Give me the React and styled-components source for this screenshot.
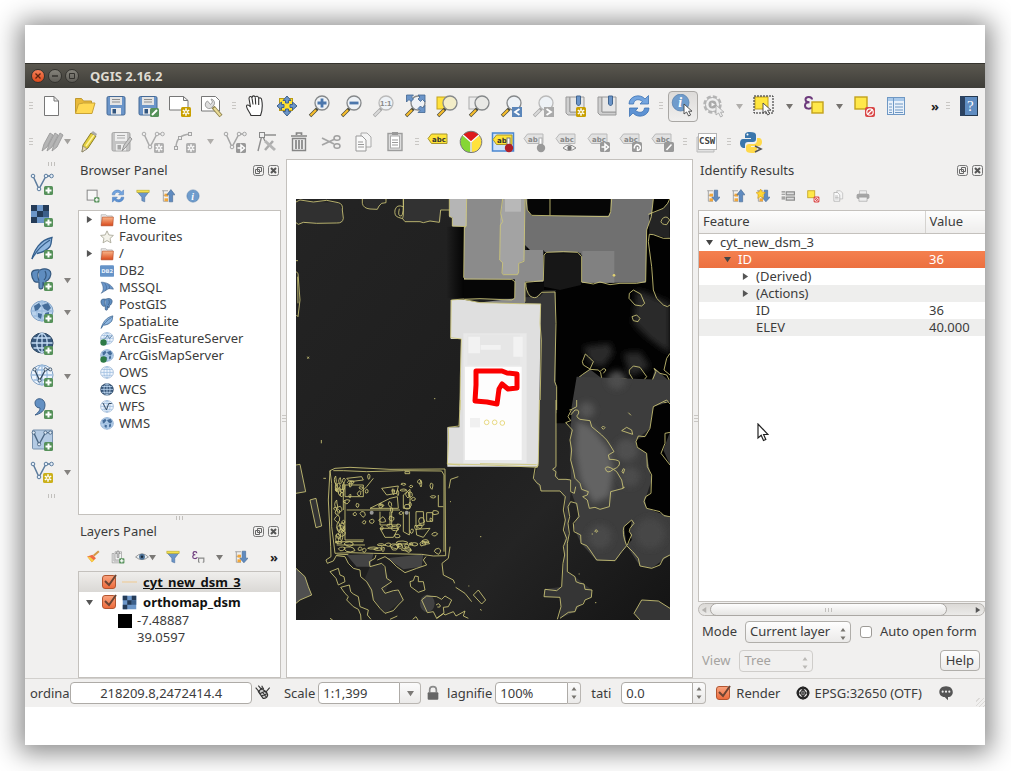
import React from "react";
import styled, { createGlobalStyle, css } from "styled-components";

const Global = createGlobalStyle`
  * { box-sizing: border-box; }
  body { margin: 0; background: #fff; }
  body, button, input, select, table {
    font-family: "Noto Sans", "Open Sans", sans-serif;
    font-size: 13px;
    line-height: 17px;
    color: #3c3c3c;
  }
`;

/* ---------- page and window ---------- */

const Page = styled.div`
  min-height: 100vh;
  padding: 25px 26px 26px 25px;
  display: flex;
  overflow: hidden;
`;
const Sheet = styled.div`
  flex: 1;
  min-width: 0;
  padding: 38px 0;
  display: flex;
  background: #fff;
  box-shadow: 0 2px 24px 6px rgba(0, 0, 0, 0.46);
`;
const Window = styled.main`
  flex: 1;
  min-width: 0;
  display: flex;
  flex-direction: column;
  background: #f1f0ef;
`;
const TitleBar = styled.header`
  height: 25px;
  padding: 0 6px;
  display: flex;
  align-items: center;
  gap: 3px;
  background: linear-gradient(#5a574f, #3e3d38);
  border-top: 1px solid #35342f;
`;
const WinButton = styled.button`
  width: 14px;
  height: 14px;
  padding: 0;
  display: flex;
  border-radius: 50%;
  border: 1px solid #34332f;
  background: ${(p) => (p.$close ? "linear-gradient(#f58058, #dd4a1c)" : "linear-gradient(#85837b, #5f5d57)")};
`;
const WinTitle = styled.h1`
  margin: 0 0 0 8px;
  font-size: 13px;
  line-height: 17px;
  font-weight: 700;
  color: #dfdbd2;
`;

/* ---------- tool bars ---------- */

const ToolBar = styled.div`
  height: ${(p) => p.$h}px;
  display: flex;
  align-items: center;
`;
const GripBox = styled.span`
  flex: none;
  width: ${(p) => p.$w}px;
  height: 8px;
  display: flex;
  justify-content: center;
  &::before {
    content: "";
    width: 4px;
    height: 7px;
    background: repeating-linear-gradient(#c9c7c4 0 1px, transparent 1px 3px);
  }
`;
const GripRow = styled.span`
  width: 100%;
  height: ${(p) => p.$h}px;
  display: flex;
  align-items: center;
  justify-content: center;
  &::before {
    content: "";
    width: 7px;
    height: 4px;
    background: repeating-linear-gradient(90deg, #c2c0bd 0 1px, transparent 1px 3px);
  }
`;
const ToolButton = styled.button`
  flex: none;
  width: ${(p) => p.$w || 32}px;
  height: 32px;
  padding: 0;
  display: flex;
  align-items: center;
  justify-content: center;
  border: 0;
  background: none;
  ${(p) =>
    p.$on &&
    css`
      width: 30px;
      height: 31px;
      margin-left: 2px;
      border: 1px solid #a9a7a4;
      border-radius: 4px;
      background: linear-gradient(#dddbd9, #f0efee);
    `}
  ${(p) =>
    p.$more &&
    css`
      flex: 1;
      justify-content: flex-end;
      padding-right: 3px;
      font-weight: 700;
      color: #222;
    `}
`;
const SideBar = styled.nav`
  width: 53px;
  display: flex;
  flex-direction: column;
`;
const SideRow = styled.div`
  height: 32px;
  padding-left: 1px;
  display: flex;
`;
const PanelTools = styled.div`
  height: 28px;
  padding-left: 2px;
  display: flex;
  align-items: center;
`;

/* ---------- docks ---------- */

const Body = styled.div`
  flex: 1;
  min-height: 0;
  display: flex;
`;
const Dock = styled.section`
  width: ${(p) => p.$w}px;
  padding-top: 1px;
  display: flex;
  flex-direction: column;
`;
const DockTitle = styled.div`
  height: 22px;
  padding: 0 2px 2px;
  display: flex;
  align-items: center;
  gap: 4px;
`;
const DockName = styled.h2`
  flex: 1;
  margin: 0;
  font-size: 13px;
  line-height: 17px;
  font-weight: 400;
`;
const DockButton = styled.button`
  width: 11px;
  height: 11px;
  padding: 0;
  border: 0;
  display: flex;
  background: none;
`;
const Tree = styled.ul`
  margin: 0;
  padding: 0;
  list-style: none;
  background: #fff;
  border: 1px solid #c4c1bd;
  ${(p) => (p.$h ? `height: ${p.$h}px;` : "flex: 1;")}
`;
const Node = styled.li`
  height: ${(p) => p.$h || 17}px;
  padding-left: 7px;
  display: flex;
  align-items: center;
  white-space: nowrap;
  font-weight: ${(p) => (p.$bold ? 700 : 400)};
  color: ${(p) => (p.$bold ? "#111" : "#3c3c3c")};
  background: ${(p) => (p.$selected ? "linear-gradient(#efeeec, #dad8d5)" : "none")};
`;
const Expander = styled.span`
  width: 14px;
  display: flex;
`;
const NodeIcon = styled.span`
  width: 19px;
  display: flex;
`;
const LayerLabel = styled.label`
  margin-left: 2px;
  display: flex;
  align-items: center;
  gap: 6px;
`;
const LayerName = styled.span`
  text-decoration: ${(p) => (p.$u ? "underline" : "none")};
`;
const Legend = styled(Node)`
  padding-left: 39px;
  gap: 5px;
`;
const Swatch = styled.i`
  width: 14px;
  height: 14px;
  background: ${(p) => p.$c};
`;
const Splitter = styled.div`
  width: 5px;
  display: flex;
  align-items: center;
`;

/* ---------- canvas ---------- */

const Canvas = styled.section`
  flex: 1;
  min-width: 0;
  padding: 39px 22px 0 9px;
  background: #fff;
  border: 1px solid #c4c1bd;
  svg { display: block; width: 100%; height: auto; }
`;

/* ---------- identify results ---------- */

const ResultBox = styled.div`
  position: relative;
  flex: 1;
  background: #fff;
  border: 1px solid #c4c1bd;
  border-right: 0;
`;
const Results = styled.table`
  width: 100%;
  border-collapse: collapse;
  table-layout: fixed;
`;
const Th = styled.th`
  height: 22px;
  width: ${(p) => p.$w || "auto"};
  padding: 0 4px;
  text-align: left;
  font-weight: 400;
  background: linear-gradient(#fdfdfd, #eeedec);
  border-bottom: 1px solid #c4c1bd;
  & + & { border-left: 1px solid #d5d3d0; }
`;
const Tr = styled.tr`
  height: 17px;
  background: ${(p) => (p.$selected ? "linear-gradient(#f4804f, #ec7040)" : p.$alt ? "#eeeeed" : "#fff")};
  td { color: ${(p) => (p.$selected ? "#fff" : "#3c3c3c")}; }
`;
const Td = styled.td`
  padding: 0 4px;
  line-height: 17px;
`;
const Feature = styled.div`
  padding-left: ${(p) => 3 + p.$level * 18}px;
  display: flex;
  align-items: center;
  white-space: nowrap;
`;
const Pointer = styled.svg`
  position: absolute;
  left: 58px;
  top: 212px;
`;
const ScrollBar = styled.div`
  height: 13px;
  margin: 1px 0;
  display: flex;
  align-items: center;
  border: 1px solid #b9b6b2;
  border-radius: 7px;
  background: linear-gradient(#dcdad7, #ebeae8);
`;
const ScrollArrow = styled.button`
  width: 11px;
  height: 11px;
  padding: 0 2px;
  border: 0;
  display: flex;
  align-items: center;
  background: none;
`;
const Thumb = styled.div`
  width: 237px;
  height: 13px;
  display: flex;
  border: 1px solid #aaa7a3;
  border-radius: 7px;
  background: linear-gradient(#fdfdfd, #e6e5e3);
`;
const Gap = styled.span`
  flex: 1;
`;
const FormRow = styled.div`
  height: 29px;
  padding: 0 5px 0 4px;
  display: flex;
  align-items: center;
  gap: 9px;
  white-space: nowrap;
`;
const FormEnd = styled.div`
  height: 3px;
`;
const Field = styled.label`
  display: flex;
  align-items: center;
  gap: ${(p) => p.$gap || 8}px;
  color: ${(p) => (p.$off ? "#a5a3a0" : "#3c3c3c")};
`;
const SelectWrap = styled.span`
  position: relative;
  width: ${(p) => p.$w}px;
  > svg { position: absolute; right: 5px; top: 6px; }
`;
const Select = styled.select`
  display: block;
  width: 100%;
  height: 22px;
  padding: 0 4px;
  appearance: none;
  border: 1px solid ${(p) => (p.disabled ? "#cfcdca" : "#b0aeaa")};
  border-radius: 4px;
  background: ${(p) => (p.disabled ? "#f1f0ef" : "linear-gradient(#fefefe, #ebeae9)")};
  color: ${(p) => (p.disabled ? "#a5a3a0" : "#3c3c3c")};
  opacity: 1;
`;
const PushButton = styled.button`
  height: 21px;
  padding: 0 5px;
  border: 1px solid #b0aeaa;
  border-radius: 4px;
  background: linear-gradient(#fefefe, #ebeae9);
`;
const Check = styled.input`
  appearance: none;
  flex: none;
  width: ${(p) => (p.$small ? 12 : 14)}px;
  height: ${(p) => (p.$small ? 12 : 14)}px;
  margin: 0;
  border: 1px solid #9d9a96;
  border-radius: 3px;
  background: #fff;
  &:checked {
    border-color: #b35530;
    background: linear-gradient(#f9a27d, #ed6c3d);
  }
`;
const CheckWrap = styled.span`
  position: relative;
  display: flex;
  svg { position: absolute; left: 0; top: -2px; pointer-events: none; }
`;

/* ---------- status bar ---------- */

const StatusBar = styled.footer`
  height: 29px;
  padding: 0 0 0 5px;
  display: flex;
  align-items: center;
  border-top: 1px solid #d2d0cd;
  white-space: nowrap;
`;
const StatusField = styled.label`
  display: flex;
  align-items: center;
  flex: ${(p) => (p.$grow ? "1" : "none")};
  min-width: 0;
  margin-right: ${(p) => p.$mr || 0}px;
`;
const StatusLabel = styled.span`
  flex: none;
  width: ${(p) => p.$w}px;
  padding-right: ${(p) => (p.$end ? 3 : 0)}px;
  text-align: ${(p) => (p.$end ? "right" : "left")};
`;
const TextBox = styled.input`
  min-width: 0;
  flex: ${(p) => (p.$w ? "none" : "1")};
  width: ${(p) => (p.$w ? p.$w + "px" : "auto")};
  height: 22px;
  padding: 0 4px;
  text-align: ${(p) => (p.$center ? "center" : "left")};
  border: 1px solid #aeaba7;
  border-radius: ${(p) => (p.$joined ? "4px 0 0 4px" : "4px")};
  background: #fff;
`;
const Stepper = styled.button`
  flex: none;
  width: ${(p) => p.$w}px;
  height: 22px;
  padding: 0;
  display: flex;
  align-items: center;
  justify-content: center;
  border: 1px solid #b9b6b2;
  border-left: 0;
  border-radius: 0 4px 4px 0;
  background: linear-gradient(#fbfbfb, #ebeae9);
`;
const StatusButton = styled.button`
  flex: none;
  height: 22px;
  padding: 0;
  margin-left: ${(p) => p.$ml || 0}px;
  display: flex;
  align-items: center;
  gap: 4px;
  border: 0;
  background: none;
`;
const Corner = styled.span`
  flex: none;
  align-self: flex-end;
  width: 9px;
  height: 9px;
  margin-left: 22px;
  background: repeating-linear-gradient(135deg, transparent 0 2px, #dcdad8 2px 3px);
`;

/* ---------- small glyphs ---------- */

const Svg = ({ s = 24, children, ...rest }) => (
  <svg width={s} height={s} viewBox="0 0 24 24" fill="none" aria-hidden="true" {...rest}>{children}</svg>
);
const Down = ({ c = "#7b7976", s = 7 }) => (
  <svg width={s} height={s} viewBox="0 0 8 8" aria-hidden="true"><path d="M0 1h8L4 7z" fill={c} /></svg>
);
const Right = ({ c = "#555", s = 7 }) => (
  <svg width={s} height={s} viewBox="0 0 8 8" aria-hidden="true"><path d="M1 0v8l6-4z" fill={c} /></svg>
);
const UpDown = ({ c = "#77746f" }) => (
  <svg width="6" height="14" viewBox="0 0 6 14" aria-hidden="true">
    <path d="M3 1l2.500 3.500h-5zM3 13l2.500-3.500h-5z" fill={c} />
  </svg>
);
const Tick = () => (
  <svg width="16" height="15" viewBox="0 0 16 15" fill="none" aria-hidden="true">
    <path d="M3 8l4 4 7-10" stroke="#6b4433" strokeWidth="2" />
  </svg>
);

const PlusBadge = ({ x = 14, y = 14 }) => (
  <g transform={`translate(${x} ${y})`}>
    <rect width="9" height="9" rx="1.500" fill="#56915a" /><path d="M4.500 1.500v6M1.500 4.500h6" stroke="#fff" strokeWidth="2" />
  </g>
);
const StarBadge = ({ x = 13, y = 13, c = "#c9a000" }) => (
  <g transform={`translate(${x} ${y})`}>
    <rect width="10" height="10" rx="1.500" fill={c} />
    <path d="M5 1.300v7.400M1.800 3.200l6.400 3.600M8.200 3.200L1.800 6.800" stroke="#fff" strokeWidth="1.500" /><circle cx="5" cy="5" r="1" fill={c} />
  </g>
);
const ArrowBadge = ({ x = 13, y = 13, d = "M1.500 5h4M5 2l3.500 3L5 8z" }) => (
  <g transform={`translate(${x} ${y})`}>
    <rect width="10" height="10" rx="1.500" fill="#999" /><path d={d} stroke="#fff" strokeWidth="1.500" fill="none" />
  </g>
);
const Cursor = ({ x, y, c = "#444", f = "#fff" }) => (
  <path transform={`translate(${x} ${y})`} d="M0 0v10l2.600-2 2 4 2-1-2-3.800H8z" fill={f} stroke={c} strokeWidth=".9" />
);
const Lens = ({ gray, children, fill = "#eef2f6" }) => (
  <>
    <path d="M10.500 14.500l-7.500 7.500" stroke={gray ? "#a5a5a5" : "#4a4a3a"} strokeWidth="3.400" />
    <path d="M9 16l-5.500 5.500" stroke={gray ? "#d9d9d9" : "#f7bd2c"} strokeWidth="2.200" />
    <circle cx="15" cy="9" r="7" fill={fill} stroke={gray ? "#bababa" : "#85888a"} strokeWidth="1.300" />
    {children}
  </>
);
const Floppy = ({ gray }) => (
  <>
    <rect x="3" y="2.500" width="18" height="18.500" rx="1.500" fill={gray ? "#c4c4c4" : "#6b95c9"} stroke={gray ? "#a5a5a5" : "#466a96"} />
    <rect x="6" y="3" width="12" height="8" fill={gray ? "#eee" : "#e4e4e4"} /><path d="M8 5.500h8M8 8h8" stroke={gray ? "#aaa" : "#8d8d8d"} />
    <rect x="7" y="14" width="10" height="6.500" fill="#ececec" /><rect x="8.500" y="15" width="3.500" height="4.500" fill={gray ? "#a5a5a5" : "#31557f"} />
  </>
);
const Vee = ({ c = "#5c7c9e", f = "#e4edf6", s = 1.5 }) => (
  <>
    <path d="M3 4l6 13 7-13h6" stroke={c} strokeWidth={s} />
    {[[3, 4], [9, 17], [16, 4], [21.500, 4]].map(([x, y]) => <circle key={x} cx={x} cy={y} r="1.800" fill={f} stroke={c} />)}
  </>
);
const Globe = ({ dark, land, cx = 12, cy = 11, r = 10.5 }) => (
  <>
    <ellipse cx={cx} cy={cy} rx={r + 0.5} ry={r - 0.5} fill={dark ? "#38587c" : land ? "#b9d2ec" : "#eef5fd"} stroke={dark ? "#2c4763" : "#7d9fc4"} />
    <path d={`M${cx - r} ${cy}h${2 * r}M${cx} ${cy - r}v${2 * r}M${cx - r + 2} ${cy - 5}h${2 * r - 4}M${cx - r + 2} ${cy + 5}h${2 * r - 4}`} stroke={dark ? "#c4dcf4" : "#9dbddf"} strokeWidth="1.300" />
    <ellipse cx={cx} cy={cy} rx={r / 2} ry={r - 1} stroke={dark ? "#c4dcf4" : "#9dbddf"} strokeWidth="1.300" />
    {land && <path d="M4 6l5-3 2 3-3 4-3 1zM12 5l6-2 3 5-3 3-4-2zM8 13l4 1-1 5-3-2zM15 13l4-1 0 4-3 2z" fill="#456d9a" />}
  </>
);
const Feather = () => (
  <>
    <path d="M2 23C4 14 10 4 22 1.500c-1 3 0 5-2 9-4 5-8 6-13 7" fill="#8fb6df" stroke="#355f8c" strokeWidth="1.300" />
    <path d="M2 23C6 15 12 9 20 4" stroke="#355f8c" strokeWidth="1.200" />
  </>
);
const Elephant = () => (
  <path d="M2 4c2-3 6-2 8-2 4-2 7-1 9 0 3 2 2 7-1 10l-2 1v3l-2 1-1-3v5c0 2-4 3-4 0v-5c-3 0-3 1-5-1-2-3-3-6-2-9z M9 3c-2 3-1 7 0 10M15 3c2 4 1 7-1 9" fill="#5f8dc0" stroke="#36597f" strokeWidth="1.200" />
);
const Raster = () => (
  <>
    <rect x="1" y="1" width="18" height="18" fill="#6c96c8" />
    <path d="M1 1h6v6H1zM13 1h6v6h-6zM7 7h6v6H7zM1 13h6v6H1z" fill="#243b57" /><path d="M13 7h6v6h-6z" fill="#3c5f8a" />
  </>
);
const Tag = ({ gray, t = "abc" }) => (
  <>
    <path d="M1 8.500L4.500 4H20v9.500H4.500z" fill={gray ? "#e2e2e2" : "#ffe437"} stroke={gray ? "#b9b9b9" : "#a8962c"} />
    <text x="5" y="11.500" fontFamily="DejaVu Sans" fontWeight="700" fontSize="7" fill={gray ? "#888" : "#333"}>{t}</text>
  </>
);
const Refresh = () => (
  <>
    <path d="M2 10C2 2 13-1 18 5l3.500-3.500V10H13l2.500-2.500C11 4 7 6 6.500 10z" fill="#74a5df" stroke="#3f73b4" strokeWidth=".8" />
    <path d="M22 14c0 8-11 11-16 5l-3.500 3.500V14H11l-2.500 2.500C13 20 17 18 17.500 14z" fill="#5d92d3" stroke="#3f73b4" strokeWidth=".8" />
  </>
);
const Funnel = () => (
  <><path d="M2 5h20l-7 9v8l-5-2v-6z" fill="#6b95c9" stroke="#4a6f9d" /><rect x="1.500" y="2" width="21" height="4" fill="#f4e04a" stroke="#b5a634" /></>
);
const TreeArrow = ({ up, star }) => (
  <>
    <path d="M2 3h10M4 3v18h8M4 11h6" stroke="#9d9d9d" strokeWidth="1.500" />
    <rect x="6" y="8" width="6" height="5" fill="#f2a73a" /><rect x="6" y="16" width="6" height="5" fill="#f2a73a" />
    <path d={up ? "M17 1l7 9h-4v12h-6V10h-4z" : "M14 2h6v12h4l-7 8-7-8h4z"} fill="#5f8bc0" stroke="#41658f" />
    {star && <path d="M8 0l2.500 5 5.500 1-4 4 1 6-5-3-5 3 1-6-4-4 5.500-1z" fill="#ffd733" stroke="#d49a18" />}
  </>
);
const Info = () => (
  <>
    <circle cx="12" cy="12" r="10.500" fill="#6f9ccc" stroke="#5580ae" />
    <text x="9" y="18" fontFamily="Liberation Serif" fontStyle="italic" fontWeight="700" fontSize="17" fill="#fff">i</text>
  </>
);
const Pages = () => (
  <><path d="M10 3h6l4 4v10H10z" fill="#f4f4f4" stroke="#aaa" /><path d="M5 6h6l4 4v11H5z" fill="#fafafa" stroke="#999" /><path d="M7 12h5M7 14.500h6M7 17h6" stroke="#999" /></>
);
const Folder = () => (
  <><path d="M2 3h8l2 2h9v16H2z" fill="#eee" stroke="#999" /><path d="M4 7h19l-1 15H2z" fill="url(#folder)" stroke="#b3421b" /></>
);
const Deselect = () => (
  <>
    <rect x="3" y="3" width="12" height="12" fill="#ffe84a" stroke="#c3a21b" strokeWidth="1.400" />
    <rect x="13" y="13" width="10" height="10" rx="2" fill="#d94545" /><circle cx="18" cy="18" r="3.200" stroke="#fff" strokeWidth="1.200" /><path d="M15.500 20.500l5-5" stroke="#fff" strokeWidth="1.200" />
  </>
);
const Epsilon = () => (
  <path d="M10 5.500C10 2 3.500 2 3.500 5.500c0 2 2 2.700 4 2.700-2.500 0-4.500 1-4.500 3.300 0 4 6 4 8 1" stroke="#6d3a7c" strokeWidth="2" />
);
const Book = () => (
  <><path d="M3 3h4v15h14V21H5l-2-2z" fill="#cfcfcf" stroke="#999" /><path d="M7 3h14v15H7z" fill="#e6e6e6" stroke="#999" /><path d="M13.500 2h4v8l-2 2-2-2z" fill="#6b95c9" stroke="#41658f" /></>
);

const icons = {
  new: <path d="M4.500 2.500h9.500l4.500 4.500v14.500h-14zM14 2.500v4.500h4.500" fill="#fff" stroke="#777" />,
  open: <><path d="M3.500 19V4.500h6l2 2.500h8v4" fill="#e8b93a" stroke="#bf982c" /><path d="M6.500 10l5-1H23l-3 10.500H3.500z" fill="#ffd953" stroke="#c9a336" /></>,
  save: <Floppy />,
  saveAs: <><Floppy /><rect x="14" y="14" width="9" height="9" rx="1.500" fill="#56915a" /><path d="M16 21l5-5" stroke="#fff" strokeWidth="2" /></>,
  composer: <><path d="M1.500 2.500h14l4.500 4v9.500H1.500zM15.500 2.500v4H20" fill="#fff" stroke="#777" /><StarBadge /></>,
  manager: <><path d="M1.500 2.500h14l4 4v10.500h-18z" fill="#fff" stroke="#777" /><path d="M7.500 7a4 4 0 1 0 5.500 5l1-1a4 4 0 0 0-3-6l1.500 3-2 2.500z" fill="#ddd" stroke="#999" strokeWidth=".9" /><path d="M13 13l8 9" stroke="#8d814c" strokeWidth="4" /><path d="M14 14l6.500 7.500" stroke="#eadb96" strokeWidth="2.200" /></>,
  hand: <path d="M8 21.500c-1-3-4-6-4.500-9C3.500 10 6 11 7.500 13L6 4.500C6 2 8.500 2 9 4c0-3 3-2.500 3.200-.5C13 1.500 15.500 2 15.700 4.500c1-1.200 3-.5 3 1.500.8 4 .8 10-1.200 15.500zM9 4l1 6.500M12.300 4l.4 6.500M15.700 5v6" fill="#fff" stroke="#333" strokeWidth="1.100" />,
  pan: <><rect x="4.500" y="4.500" width="13" height="12" fill="#ffe12e" stroke="#b99a16" /><path d="M12 2l4 4.500h-2.500V9h-3V6.500H8zM12 22l4-4.500h-2.500V15h-3v2.500H8zM2 12l4.500-4v2.500H9v3H6.500V16zM22 12l-4.500-4v2.500H15v3h2.500V16z" fill="#6b95c9" stroke="#3f618b" /></>,
  zoomIn: <Lens><path d="M15 4.500v9M10.500 9h9" stroke="#4b77ad" strokeWidth="2.800" /></Lens>,
  zoomOut: <Lens><path d="M10.500 9h9" stroke="#4b77ad" strokeWidth="2.800" /></Lens>,
  zoom1: <Lens gray><text x="9" y="12" fontFamily="Liberation Sans" fontWeight="700" fontSize="8" fill="#888">1:1</text></Lens>,
  zoomFull: <><Lens /><path d="M3.500 1h7L8.500 3l2 2-2.500 2.500-2-2-2.500 2.500zM22 1h-7l2 2-2 2 2.500 2.500 2-2L22 8zM22 18.500h-7l2-2-2-2 2.500-2.500 2 2 2.500-2.500z" fill="#6b95c9" stroke="#41658f" strokeWidth=".8" /></>,
  zoomSel: <><rect x="2" y="3" width="11" height="12" fill="#ffe23c" stroke="#c3a21b" /><Lens fill="#f3edc8" /></>,
  zoomLayer: <><rect x="2" y="3" width="11" height="12" fill="#ececec" stroke="#aaa" /><Lens fill="#e9e9e6" /></>,
  zoomLast: <><Lens /><rect x="13" y="13" width="10" height="10" fill="#5b86ba" /><path d="M20.500 15l-4.500 3 4.500 3" stroke="#fff" strokeWidth="1.800" /></>,
  zoomNext: <><Lens gray /><rect x="13" y="13" width="10" height="10" fill="#aaa" /><path d="M15.500 15l4.500 3-4.500 3" stroke="#fff" strokeWidth="1.800" /></>,
  bookNew: <><Book /><StarBadge /></>,
  book: <Book />,
  refresh: <Refresh />,
  identify: <><g transform="translate(0 -1) scale(.8)"><Info /></g><Cursor x={13} y={10} /></>,
  gear: <><circle cx="10.500" cy="10.500" r="8" stroke="#b5b5b5" strokeWidth="2.500" strokeDasharray="4.200 2.100" /><circle cx="10.500" cy="10.500" r="7" fill="#efefef" stroke="#adadad" /><circle cx="10.500" cy="10.500" r="4" fill="#aaa" /><path d="M9.500 8.500l3.500 2-3.500 2z" fill="#f4f4f4" /><Cursor x={14} y={11} c="#aaa" f="#eee" /></>,
  select: <><rect x="3" y="3" width="13" height="12" fill="#ffe63f" stroke="#c3a21b" /><rect x="2" y="2" width="19" height="17" stroke="#222" strokeDasharray="2 1" /><Cursor x={11} y={9} /></>,
  expr: <><Epsilon /><rect x="10" y="8" width="11" height="11" fill="#ffe84a" stroke="#c3a21b" strokeWidth="1.400" /></>,
  deselect: <Deselect />,
  table: <><rect x="3.500" y="3.500" width="17" height="17" fill="#e9f1fa" stroke="#6f98c4" /><rect x="4" y="4" width="16" height="3" fill="#a9c9ea" /><path d="M9.500 4v16M5 10h3M5 13h3M5 16h3M5 18.500h3M11 10h8M11 13h8M11 16h8M11 18.500h8" stroke="#6f98c4" /></>,
  help: <><rect x="3.500" y="2.500" width="17" height="19" fill="#5f8cc1" stroke="#24384f" /><path d="M3 2h5v20H3z" fill="#2c4260" /><text x="10" y="17" fontFamily="Liberation Serif" fontSize="15" fill="#fff">?</text></>,

  pencils: <path d="M2 21l2-7 6-11 3 2-6 12zM7 21l2-7 6-11 3 2-6 12zM12 21l2-7 6-11 3 2-6 12z" fill="#b5b5b5" stroke="#9a9a9a" strokeWidth=".9" />,
  pencil: <><path d="M5 22l1-7 8-12 5 3-8 12z" fill="#e3cf3e" stroke="#8a7d28" /><path d="M9 16l8-11" stroke="#fff3a0" strokeWidth="1.500" /><path d="M5 22l1-6 4 3z" fill="#e8d7b3" stroke="#777" strokeWidth=".6" /><path d="M14 3l5 3 1-2-4-3z" fill="#aaa" /></>,
  saveEdits: <><Floppy gray /><path d="M13 21l2-6 6-8 2 2-6 8z" fill="#c9c9c9" stroke="#999" /></>,
  addFeature: <><Vee c="#ababab" f="#eee" /><StarBadge c="#b0b0b0" /></>,
  addCurve: <><path d="M3 18Q3 5 17 4" stroke="#ababab" strokeWidth="1.500" />{[[3, 18], [7, 8], [17, 4]].map(([x, y]) => <rect key={x} x={x - 1.5} y={y - 1.5} width="3" height="3" fill="#eee" stroke="#a5a5a5" />)}<StarBadge c="#b0b0b0" /></>,
  moveFeature: <><Vee c="#a5a5a5" f="#eee" /><ArrowBadge /></>,
  nodeTool: <><path d="M3 21L7 5h14M7 5l3 6" stroke="#8f8f8f" strokeWidth="1.400" /><rect x="4.500" y="2.500" width="5" height="5" fill="#eee" stroke="#888" /><path d="M18 11l-8 9" stroke="#aaa" strokeWidth="2.500" /><path d="M10 11l10 9" stroke="#b5b5b5" strokeWidth="3" /></>,
  trash: <><path d="M5.500 8.500h13v12h-13z" fill="#ededed" stroke="#858585" strokeWidth="1.400" /><path d="M9 10v9M12 10v9M15 10v9M4 6h16M9.500 5V3h5v2" stroke="#858585" strokeWidth="1.700" /></>,
  cut: <><path d="M3 8l12 6M3 15l13-6" stroke="#a5a5a5" strokeWidth="1.800" /><ellipse cx="18" cy="8" rx="3" ry="2.300" stroke="#a0a0a0" strokeWidth="1.500" /><ellipse cx="18" cy="16" rx="3" ry="2.300" stroke="#a0a0a0" strokeWidth="1.500" /></>,
  copy: <Pages />,
  paste: <><rect x="5" y="3.500" width="14" height="17" fill="#ddd" stroke="#9d9d9d" strokeWidth="1.400" /><rect x="7.500" y="6" width="9" height="12" fill="#fff" stroke="#aaa" /><path d="M9 10h6M9 12.500h6M9 15h6" stroke="#999" /><path d="M9 2h6v3H9z" fill="#999" /></>,
  label: <Tag />,
  pie: <><path d="M12 12L4 5a10.500 10.500 0 0 1 16 0z" fill="#dd1c1c" stroke="#777" /><path d="M12 12l8-7a10.500 10.500 0 0 1-8 17.500z" fill="#ffe23c" stroke="#777" /><path d="M12 12L4 5a10.500 10.500 0 0 0 8 17.500z" fill="#86d635" stroke="#777" /><path d="M12 22V12L4 5m8 7l8-7" stroke="#fff" strokeWidth="1.300" /></>,
  labelOn: <><rect x="1.500" y="3" width="21" height="18" fill="#cfe3fa" stroke="#4a86d0" strokeWidth="1.500" /><g transform="translate(1 1)"><Tag t="ab" /></g><rect x="16" y="8" width="3" height="9" fill="#fff" stroke="#777" /><circle cx="18" cy="18" r="4.200" fill="#b01f28" /></>,
  labelPin: <><Tag gray t="ab" /><rect x="16" y="8" width="3" height="9" fill="#fff" stroke="#aaa" /><circle cx="18" cy="18" r="4.200" fill="#999" /></>,
  labelEye: <><Tag gray /><path d="M8 18q6-6 13 0-7 5-13 0z" fill="#f3f3f3" stroke="#888" /><circle cx="14.500" cy="18" r="2.200" fill="#777" /></>,
  labelMove: <><Tag gray /><ArrowBadge x={13} y={12} /></>,
  labelTurn: <><Tag gray /><ArrowBadge x={13} y={12} d="M2.500 6.500a3 3 0 1 1 3 2M5.500 5v4" /></>,
  labelEdit: <><Tag gray /><ArrowBadge x={13} y={12} d="M2.500 8l5-5.500" /></>,
  csw: <><path d="M2 7h17v15H2z" fill="#e2e2e2" stroke="#bbb" /><rect x="3.500" y="3.500" width="18" height="16" fill="#fff" stroke="#b5b5b5" /><text x="4" y="14" fontFamily="DejaVu Sans Mono" fontWeight="700" fontSize="9" fill="#444">CSW</text></>,
  python: <><path d="M11 2C6 2 6 4 6 6v2h6v1H4c-4 0-4 8 0 9h2v-3c0-2 1-3 3-3h5c2 0 3-1 3-3V5c0-2-2-3-6-3z" fill="#3a76ac" /><circle cx="8.500" cy="4.500" r="1" fill="#fff" /><path d="M13 23c5 0 5-2 5-4v-2h-6v-1h8c4 0 4-8 0-8h-2v2c0 2-1 4-3 4h-5c-2 0-3 1-3 3v3c0 2 2 3 6 3z" fill="#ffd94a" /><path d="M16 16l6 3-6 3" stroke="#555" strokeWidth="1.600" /></>,

  vector: <><Vee /><PlusBadge /></>,
  raster: <><Raster /><PlusBadge /></>,
  spatialite: <><Feather /><PlusBadge /></>,
  postgis: <><Elephant /><PlusBadge /></>,
  wms: <><Globe land /><PlusBadge /></>,
  wcs: <><Globe dark /><PlusBadge /></>,
  wfs: <><Globe /><g transform="translate(2 2) scale(.85)"><Vee c="#34495f" /></g><PlusBadge /></>,
  delimited: <><path d="M5 7c0-6 10-6 10 2 0 6-5 9-10 10 4-3 5-5 5-7-3 0-5-2-5-5z" fill="#6390c3" stroke="#3d5f87" /><PlusBadge /></>,
  virtual: <><rect x="2.500" y="2" width="20" height="19" rx="1" fill="#b3cae3" stroke="#7791ad" /><g transform="translate(1 1) scale(.9)"><Vee c="#4a6683" /></g><PlusBadge /></>,
  newVector: <><Vee /><StarBadge c="#cbb01a" /></>,

  addLayer: <><rect x="2" y="2" width="17" height="17" fill="#f7f7f7" stroke="#888" strokeWidth="1.700" /><PlusBadge /></>,
  filter: <Funnel />,
  collapse: <TreeArrow up />,
  expand: <TreeArrow />,
  expandNew: <TreeArrow star />,
  info: <Info />,
  brush: <><path d="M13 10l9-8" stroke="#d39a46" strokeWidth="3.500" /><path d="M2 11l9-3 6 6-7 7z" fill="#ef6a44" /><path d="M2 11l5 1 7 6-4 3z" fill="#f6cf45" /></>,
  group: <><path d="M2 6h3v13h10v3H2z" fill="#eee" stroke="#888" /><path d="M7 3h11v14H7z" fill="#f4f4f4" stroke="#888" /><path d="M12 1l4 5h-2.500v7h-3V6H8z" fill="#ccc" stroke="#777" /><PlusBadge /></>,
  eye: <><path d="M1 12Q12 1 23 12 12 21 1 12z" fill="#ebf1f6" stroke="#8d8d8d" strokeWidth="1.500" /><circle cx="12" cy="11.500" r="5" fill="#4d7196" /><circle cx="12" cy="11.500" r="2" fill="#1a2a3c" /></>,
  exprFilter: <><Epsilon /><path d="M13 21v-7h9v7M13 21h2M20 21h2" stroke="#888" strokeWidth="2" /></>,
  form: <path d="M1 5h6M9 5h14v5H9zM1 17h6M9 14h14v5H9zM1 9h6M1 14h6" stroke="#8c8c8c" strokeWidth="2" fill="#ddd" />,
  copySmall: <Pages />,
  print: <><path d="M6 3h12v6H6z" fill="#eee" stroke="#aaa" /><rect x="1" y="8" width="22" height="9" rx="3" fill="#a5a5a5" /><path d="M5 14h14v7H5z" fill="#eee" stroke="#999" /></>,

  home: <Folder />,
  star: <path d="M12 1.500l3.200 7 7.800.8-5.800 5.200 1.600 7.500-6.800-3.900L5.200 22l1.600-7.500L1 9.300l7.800-.8z" fill="#f3f2ea" stroke="#a9a898" strokeWidth="1.500" />,
  db2: <><rect x="0" y="2" width="24" height="20" rx="2" fill="#6593c8" /><text x="2" y="16" fontFamily="DejaVu Sans" fontWeight="700" fontSize="9" fill="#e8f1fb">DB2</text></>,
  mssql: <path d="M2 2c8 0 18 4 21 12l-8-1-13 8c5-5 4-12 0-19zM8 4c4 5 4 9 1 13M14 6c3 3 3 6 1 8" fill="#6a95c8" stroke="#3f628c" />,
  pg: <Elephant />,
  lite: <Feather />,
  arcF: <><Globe /><path d="M8 12l5-6 3 5 5-5" stroke="#47719c" strokeWidth="1.500" /><circle cx="6" cy="18" r="5.500" fill="#2d7a46" /></>,
  arcM: <><Globe land /><circle cx="6" cy="18" r="5.500" fill="#2d7a46" /></>,
  ows: <Globe />,
  wcsS: <Globe dark />,
  wfsS: <><Globe /><path d="M5 5l6 12 4-11h5" stroke="#34495f" strokeWidth="1.700" /></>,
  wmsS: <Globe land />,
  rasterS: <g transform="scale(1.200)"><Raster /></g>,
};
const Icon = ({ n, s }) => <Svg s={s}>{icons[n]}</Svg>;

const Tools = ({ items, grip }) =>
  items.map((it, i) => {
    if (it === "|") return <GripBox key={i} $w={grip} />;
    if (it === "v" || it === "V") return <ToolButton key={i} $w={18} aria-label="Menu"><Down c={it === "v" ? "#b0aeab" : "#76736f"} /></ToolButton>;
    if (it === ">>") return <ToolButton key={i} $more aria-label="More tools">»</ToolButton>;
    if (it === "pencils") return <ToolButton key={i} $w={36} aria-label={it}><Icon n={it} /><Down c="#a3a19e" /></ToolButton>;
    return <ToolButton key={i} aria-label={it} $on={it === "identify"}><Icon n={it} /></ToolButton>;
  });

const DockHead = ({ name }) => (
  <DockTitle>
    <DockName>{name}</DockName>
    <DockButton aria-label="Float">
      <svg width="11" height="11" viewBox="0 0 11 11" fill="none"><rect x=".5" y=".5" width="10" height="10" rx="2" stroke="#777" /><path d="M4.500 2.500h4v4h-4zM2.500 4.500h4v4h-4z" stroke="#666" /></svg>
    </DockButton>
    <DockButton aria-label="Close">
      <svg width="11" height="11" viewBox="0 0 11 11" fill="none"><rect x=".5" y=".5" width="10" height="10" rx="2" stroke="#777" /><path d="M3 3l5 5M8 3L3 8" stroke="#555" strokeWidth="2" /></svg>
    </DockButton>
  </DockTitle>
);

/* ---------- map ---------- */

// Small jagged contours scattered over the parking area.
const specks = (() => {
  let seed = 11;
  const rnd = () => ((seed = (seed * 16807) % 2147483647) / 2147483647);
  let d = "";
  for (let i = 0; i < 96; i++) {
    const zone = i % 4;
    const x = zone === 0 ? 136 + rnd() * 26 : zone === 1 ? 145 + rnd() * 300 : 165 + rnd() * 285;
    const y = zone === 0 ? 235 + rnd() * 205 : zone === 1 ? 428 + rnd() * 26 : 228 + rnd() * 200;
    const w = zone === 1 ? 5 + rnd() * 12 : 3 + rnd() * 8;
    const h = zone === 0 ? 4 + rnd() * 12 : 3 + rnd() * 7;
    d += `M${Math.round(x - w)} ${Math.round(y)}`;
    for (let k = 1; k < 7; k++) {
      const a = Math.PI + (k * Math.PI * 2) / 7;
      const r = 0.6 + rnd() * 0.6;
      d += `L${Math.round(x + Math.cos(a) * w * r)} ${Math.round(y + Math.sin(a) * h * r)}`;
    }
    d += "Z";
  }
  return d;
})();

const Quarter = ({ x, y, children }) => <g transform={`translate(${x} ${y}) scale(.33333)`}>{children}</g>;
const Lines = ({ d }) => <path d={d} fill="none" stroke="#cfc878" strokeWidth="3" strokeLinejoin="round" opacity=".85" />;

const MapView = () => (
  <svg viewBox="296 199 374 421" role="img" aria-label="Elevation map with contours">
    <defs>
      <filter id="soft" x="-20%" y="-20%" width="140%" height="140%"><feGaussianBlur stdDeviation="9" /></filter>
      <linearGradient id="shade"><stop offset="0" stopColor="#202020" /><stop offset=".4" stopColor="#141414" /><stop offset="1" stopColor="#040404" /></linearGradient>
      <linearGradient id="ground" x2="1" y2="1"><stop offset="0" stopColor="#242424" /><stop offset=".5" stopColor="#1e1e1e" /><stop offset=".7" stopColor="#242424" /><stop offset="1" stopColor="#141414" /></linearGradient>
    </defs>
    <rect x="296" y="199" width="374" height="421" fill="url(#ground)" />

    <Quarter x={480} y={190}>
      <path d="M140 27H570V700H228V300H140z" fill="#020202" />
      <path d="M470 300L500 310 570 340V490L540 470 500 440 460 400zM310 470L390 460 400 490 370 530 330 520zM430 490L480 485 510 530 450 560z" fill="#2a2a2a" filter="url(#soft)" />
      <path d="M135 322L180 320 190 308 226 305V575L230 590V670H180V340H135z" fill="#373737" />
      <path d="M-92 27H135V180H190V275H135V340H-20L105 325V268H-48V110H-83V80H-92z" fill="#8b8b8b" />
      <path d="M-92 27H-40V108H-83V82H-92z" fill="#b5b5b5" />
      <path d="M135 27H520L514 80 500 120 497 278H305V195L295 187H195L190 180H150L135 165z" fill="#707070" />
      <path d="M307 183H403V278H307z" fill="#818181" />
      <path d="M70 27L60 90V210L68 220V253H115V220L132 210V27z" fill="#a3a3a3" />
      <path d="M75 27h48v38H75z" fill="#b8b8b8" />
      <path d="M142 27V60L155 77H385L392 65V27z" fill="#060606" />
      <path d="M192 190H303V285L240 300 192 290z" fill="#171717" />
      <path d="M137 278H192V300L180 308 165 322 150 318z" fill="#0b0b0b" />
      <path d="M-100 110H-48V325H-100z" fill="url(#shade)" />
      <path d="M-48 270H103V325H-48z" fill="#060606" />
      <path d="M-88 330L-48 329 0 338 182 341 176 830H-98V712H-62L-57 447H-88z" fill="#dfdfdf" />
      <path d="M-50 430H140V820H-50z" fill="#e9e9e9" />
      <path d="M-38 434H120V525H-38z" fill="#e6e6e6" />
      <path d="M-35 440h35v50h-35zM100 440h28v60h-28zM2 465h60v14H2z" fill="#f2f2f2" />
      <path d="M-45 530H125V810H-45z" fill="#fdfdfd" />
      <path d="M-30 684H0V712H-30z" fill="#f0f0f0" />
      <path d="M297 560L330 538 365 565 515 575 525 535 570 575V670H270L290 655z" fill="#383838" />
      <path d="M507 75L550 55 569 30V145L508 133z" fill="#242424" />
      <Lines d="M68 27L62 70 68 95 61 105 59 210 68 218 66 250 70 254H112L116 246V220L132 214 135 27M138 27L142 60 155 76 386 80 392 65 395 27M210 27V76" />
      <Lines d="M520 27L514 80 500 120 497 275 470 280H420L390 284 360 276 340 282 305 276V200L293 187 250 185 200 187 192 195 190 272 160 275 137 277Q138 305 150 318 165 328 175 318L185 307 225 306 228 400 224 575 230 590V660M-48 267L95 268 105 275 104 325 95 330 0 326-48 328M135 278V335M-45 329L0 338 120 341 182 342 180 400 184 450 180 660" />
      <Lines d="M570 145L550 145 520 134 508 133 505 155 515 230 518 270 520 300 530 325 550 345 562 350 570 345M505 73L550 55 563 40 569 27M543 95Q548 78 562 82L569 90 560 104Q545 104 543 95M448 310L460 300 482 312 494 340 485 348 465 345 447 325zM456 380L470 375 480 385 474 395 460 392zM307 515L316 492 325 500 340 515 330 537 310 525z" />
      <Lines d="M268 660L290 655 290 620 297 600 293 565 308 553 330 538 355 540 362 548 365 565 395 567 430 565 455 572 480 570 500 578 515 575 528 545 522 535 540 550 560 555 570 575M360 545Q372 530 378 540L370 550M448 540L460 528 480 532 500 560 490 572 460 570 448 550zM455 570L460 590 485 595 500 585M460 625L470 602 500 598 502 608 480 615 470 628zM570 490L560 505 552 540 570 555M513 655L540 635 569 640" />
      <circle cx="402" cy="256" r="4" fill="#e0d070" />
    </Quarter>

    <Quarter x={290} y={190}>
      <path d="M18 34L145 38 157 60 158 98 18 100z" fill="#303030" /><path d="M340 27H478V58L452 60V95H350L340 85z" fill="#323232" /><path d="M217 27H288L262 58H232z" fill="#2b2b2b" />
      <Lines d="M18 36L30 30 70 36 110 31 145 38Q160 42 157 60L160 85Q158 100 140 99L80 100 40 97 25 103 18 98M217 27V40Q220 55 240 57L262 58 267 48 275 40 288 38V27M340 50Q320 42 315 60 312 78 325 82L338 86M328 56Q322 80 334 78 342 72 340 27V75L338 86 345 95 390 95 400 98 420 93 448 97 452 60 478 60" />
      <Lines d="M18 245L24 250 30 330 24 380 19 375M23 260L24 340M478 27V78L487 84V108L528 110 530 27M528 110L523 112 521 262 525 267M522 327L484 330 482 443 514 447 511 560 510 660M52 500l5 6M57 500l-5 6M432 626h4M18 212h6" />
    </Quarter>

    <Quarter x={480} y={400}>
      <path d="M180 0H228V200L235 238H272V278L265 350 262 515 285 530 312 552 336 570 334 592 315 600 285 635 240 655 243 592H192V568L245 560 252 490 256 300 240 273 183 273 160 235 175 195z" fill="#353535" />
      <path d="M290 -70L570 -60V0L520 20 510 85 468 120 500 160 515 240 495 300 520 330 570 350V465L515 505 480 498 440 437 405 482H350L303 430 280 380 297 340 275 280 270 150 275 20z" fill="#3d3d3d" />
      <path d="M290 60L335 80 390 150 400 215 388 290 340 310 300 240 285 150z" fill="#646464" filter="url(#soft)" />
      <g filter="url(#soft)"><circle cx="410" cy="-60" r="28" fill="#4e4e4e" /><circle cx="320" cy="30" r="24" fill="#555" /><circle cx="360" cy="410" r="36" fill="#4a4a4a" /><circle cx="510" cy="400" r="46" fill="#474747" /><circle cx="440" cy="150" r="34" fill="#505050" /><circle cx="450" cy="230" r="30" fill="#4b4b4b" /></g>
      <path d="M570 5L520 20 510 85 495 110 468 120 470 140 500 160 515 240 510 280 495 300 500 325 570 350z" fill="#020202" />
      <path d="M570 95L550 150 570 195zM485 600L535 603 570 625V660H480L462 640z" fill="#353535" />
      <path d="M432 380L455 360 450 395 455 420 440 437z" fill="#050505" />
      <Lines d="M175 195L165 205 160 235 170 248 180 255 183 273 240 273 256 290 250 330 256 360 250 390 260 415 250 440 254 465 249 490 245 560 230 572 195 568 192 590 240 592 243 620 232 658M228 0V200L218 208 228 215 226 228 235 238 258 238 272 240V275L283 280 287 260M290 310L272 305 264 320 269 350 264 370 268 400 262 430 262 515 285 530 288 545 300 550 312 552 315 568 336 570 334 592 315 600 310 612 290 620 285 635 265 637 240 655" />
      <Lines d="M290 310L297 350 280 370 282 395 302 405 303 430 320 437 330 450 350 480 405 482 425 455 440 437 458 455 475 475 480 498 515 505 540 495 550 475 570 465M440 437Q425 400 432 380L455 360 462 370 450 385 448 395 455 405 450 415 442 435M290 0V20L275 28 264 50 272 62 257 68 277 90 270 120 275 150 272 180 280 210 285 235 300 250 305 268 325 275 322 285 308 290 322 300 328 325 345 322 360 328 388 320 392 275 430 265 425 240 410 215 400 208Q380 225 376 205 380 195 400 208 422 200 418 185 412 178 388 178L385 165 402 155 390 135 380 120 365 105 335 80 330 62 300 58Q285 50 295 42 300 28 285 30L272 45" />
      <Lines d="M570 12L560 0 520 20 510 85 495 110 475 108 468 125 472 142 500 160 502 200 515 225 513 280 497 290 492 305 500 325 520 330 540 335 552 347 570 350M570 97L555 100 555 130 543 160 570 195M485 600L535 603 570 625M485 600L462 640 480 660M425 92L440 82 455 90 458 103zM365 83l5-5 5 5-5 5zM426 215l4-9 4 2-4 12zM344 393l5-4 4 5-5 3zM335 402h4M445 38l8 8M428 262h6M296 522h3M345 608h4" />
      <Lines d="M178 0L175 188 172 202 90 198 0 194-98 192M170 194L0 191" />
      <g fill="none" stroke="#e3d36b" strokeWidth="2.500"><circle cx="20" cy="67" r="7" /><circle cx="44" cy="67" r="7" /><circle cx="67" cy="69" r="7" /></g>
    </Quarter>

    <Quarter x={290} y={400}>
      <path d="M18 195L30 193 47 275 18 280zM60 300L78 295 95 378 78 383z" fill="#343434" />
      <path d="M18 505L45 530 65 585 30 600 18 610z" fill="#505050" />
      <path d="M170 465L250 462 240 500 200 500zM290 475L400 463 395 500 340 508z" fill="#444" />
      <path d="M240 500L275 490 300 540 285 580 325 570 340 600 285 640 245 590 225 535z" fill="#2d2d2d" />
      <ellipse cx="412" cy="610" rx="22" ry="26" fill="#424242" />
      <Lines d="M511 0L507 78 475 82 476 120 472 192 510 195M18 195L30 193 47 275 18 280M60 300L78 295 95 378 78 383zM18 505L45 530 55 560 65 585 30 600 18 610" />
      <Lines d="M120 212L135 205 180 202 300 208 465 207 467 467 430 468 395 463 250 460 180 458 135 460 132 435 125 380V250zM130 212H160L230 215 340 212 455 213 462 225V455M120 212L115 300 122 440 123 470 108 480 112 490 130 483 140 465 175 463M165 255H220V290H165zM165 300V420H222M170 330H330M160 250V330M240 325L300 295 322 290 325 325zM275 265L325 258 320 280 290 285zM340 285L360 268V325H340zM340 335V395L358 405V335M270 385H325L310 412H285zM378 335L400 335 402 375 378 378zM378 388L420 385 400 412 380 405zM410 338h18v26h-18zM135 425H220M140 435H225M270 335V375H300V335M305 335V375H325M445 285V320H460M250 235L230 260 215 275M345 215h14v6h-14zM180 245L170 235 215 230 220 240z" />
      <Lines d={specks} />
      <Lines d="M140 467L165 470 175 490 190 505 210 510 212 530 230 545 245 570 250 600 270 625 285 640 310 632 325 615 340 600 325 570 310 572 285 580 275 565 305 545 290 535 285 500 275 490 240 500 238 485 255 475 258 465M262 480L285 470 300 480 320 500 345 518 380 505 410 495 400 480 408 470M120 515L145 505 150 525 162 530 165 545 145 555 138 535zM152 562L178 555 182 575 190 582 205 590 210 620 235 630 232 645 243 658M152 562L165 580 175 590 170 600 190 620 205 628 212 645 213 660M360 545L370 542 375 528 385 530 385 545 400 545 405 570 385 577 362 560z" />
      <Lines d="M395 600L410 588 440 590 455 598 465 588 485 600 475 620 460 622 462 640 440 655 430 635 412 638zM440 655L460 640 465 645 490 635 498 648 525 633 520 648 535 655M505 230L482 238 477 265M480 440L475 475 456 490 460 525 490 540 494 550M497 562L525 580 545 605M550 585L565 570 587 600 575 612zM438 615q8-8 12 0t-8 6M300 658L322 648M368 658L378 650 384 660M120 655l8 5M94 120v10M100 235h8M480 305h3M570 410h4M570 628l5 3M535 558h3" />
      <g fill="#999"><circle cx="245" cy="338" r="6" /><circle cx="350" cy="338" r="6" /></g>
    </Quarter>

    <path d="M476 371L502 371 507 373 517 374 517 388 508 389 502 384 499 389 497 404 487 402 475 401 476 385z" fill="none" stroke="#fb0000" strokeWidth="5" strokeLinejoin="round" />
  </svg>
);

const browserItems = [
  ["Home", "home", true], ["Favourites", "star"], ["/", "home", true], ["DB2", "db2"], ["MSSQL", "mssql"],
  ["PostGIS", "pg"], ["SpatiaLite", "lite"], ["ArcGisFeatureServer", "arcF"], ["ArcGisMapServer", "arcM"],
  ["OWS", "ows"], ["WCS", "wcsS"], ["WFS", "wfsS"], ["WMS", "wmsS"],
];
const sideItems = [
  ["vector"], ["raster"], ["spatialite"], ["postgis", 1], ["wms", 1], ["wcs"], ["wfs", 1], ["delimited"], ["virtual"], ["newVector", 1],
];
const results = [
  { level: 0, name: "cyt_new_dsm_3", open: true },
  { level: 1, name: "ID", value: "36", open: true, selected: true },
  { level: 2, name: "(Derived)", closed: true },
  { level: 2, name: "(Actions)", closed: true, alt: true },
  { level: 2, name: "ID", value: "36" },
  { level: 2, name: "ELEV", value: "40.000", alt: true },
];

export default function App() {
  return (
    <Page>
      <Global />
      <Sheet>
        <Window>
          <TitleBar>
            <WinButton $close aria-label="Close"><svg width="12" height="12" viewBox="0 0 12 12"><path d="M3.500 3.500l5 5M8.500 3.500l-5 5" stroke="#5c2410" strokeWidth="1.300" /></svg></WinButton>
            <WinButton aria-label="Minimize"><svg width="12" height="12" viewBox="0 0 12 12"><path d="M3 6h6" stroke="#33322e" strokeWidth="1.500" /></svg></WinButton>
            <WinButton aria-label="Maximize"><svg width="12" height="12" viewBox="0 0 12 12"><path d="M3.500 3.500h5v5h-5z" fill="none" stroke="#33322e" /></svg></WinButton>
            <WinTitle>QGIS 2.16.2</WinTitle>
          </TitleBar>

          <ToolBar $h={36}>
            <Tools grip={11} items={["|", "new", "open", "save", "saveAs", "composer", "manager", "|", "hand", "pan", "zoomIn", "zoomOut", "zoom1", "zoomFull", "zoomSel", "zoomLayer", "zoomLast", "zoomNext", "bookNew", "book", "refresh", "|", "identify", "gear", "v", "select", "V", "expr", "V", "deselect", "table", ">>", "|", "help"]} />
          </ToolBar>
          <ToolBar $h={35}>
            <Tools grip={12} items={["|", "pencils", "pencil", "saveEdits", "addFeature", "addCurve", "v", "moveFeature", "nodeTool", "trash", "cut", "copy", "paste", "|", "label", "pie", "labelOn", "labelPin", "labelEye", "labelMove", "labelTurn", "labelEdit", "|", "csw", "|", "python"]} />
          </ToolBar>

          <Body>
            <SideBar>
              <GripRow $h={9} />
              {sideItems.map(([n, menu]) => (
                <SideRow key={n}>
                  <ToolButton aria-label={n}><Icon n={n} /></ToolButton>
                  {menu && <ToolButton $w={18} aria-label="Menu"><Down c="#85827f" /></ToolButton>}
                </SideRow>
              ))}
              <GripRow $h={16} />
            </SideBar>

            <Dock $w={203}>
              <DockHead name="Browser Panel" />
              <PanelTools>
                {["addLayer", "refresh", "filter", "collapse", "info"].map((n) => <ToolButton key={n} $w={25} aria-label={n}><Icon n={n} s={14} /></ToolButton>)}
              </PanelTools>
              <Tree>
                {browserItems.map(([name, icon, more]) => (
                  <Node key={name}>
                    <Expander>{more && <Right />}</Expander>
                    <NodeIcon><Icon n={icon} s={14} /></NodeIcon>
                    {name}
                  </Node>
                ))}
              </Tree>
              <GripRow $h={6} />
              <DockHead name="Layers Panel" />
              <PanelTools>
                <ToolButton $w={25} aria-label="Style"><Icon n="brush" s={14} /></ToolButton>
                <ToolButton $w={25} aria-label="Add group"><Icon n="group" s={14} /></ToolButton>
                <ToolButton $w={30} aria-label="Visibility"><Icon n="eye" s={14} /><Down /></ToolButton>
                <ToolButton $w={25} aria-label="Filter legend"><Icon n="filter" s={14} /></ToolButton>
                <ToolButton $w={25} aria-label="Filter by expression"><Icon n="exprFilter" s={14} /></ToolButton>
                <ToolButton $w={18} aria-label="Menu"><Down /></ToolButton>
                <ToolButton $w={25} aria-label="Expand all"><Icon n="expand" s={14} /></ToolButton>
                <ToolButton $more aria-label="More tools">»</ToolButton>
              </PanelTools>
              <Tree $h={107}>
                <Node $h={20} $bold $selected>
                  <Expander />
                  <LayerLabel>
                    <CheckWrap><Check type="checkbox" defaultChecked /><Tick /></CheckWrap>
                    <svg width="15" height="2" aria-hidden="true"><path d="M0 1h15" stroke="#efc98f" /></svg>
                    <LayerName $u>cyt_new_dsm_3</LayerName>
                  </LayerLabel>
                </Node>
                <Node $h={20} $bold>
                  <Expander><Down c="#555" /></Expander>
                  <LayerLabel>
                    <CheckWrap><Check type="checkbox" defaultChecked /><Tick /></CheckWrap>
                    <Icon n="rasterS" s={15} />
                    <LayerName>orthomap_dsm</LayerName>
                  </LayerLabel>
                </Node>
                <Legend><Swatch $c="#000" />-7.48887</Legend>
                <Legend><Swatch $c="#fff" />39.0597</Legend>
              </Tree>
            </Dock>

            <Splitter><GripBox $w={5} /></Splitter>
            <Canvas><MapView /></Canvas>
            <Splitter><GripBox $w={5} /></Splitter>

            <Dock $w={287}>
              <DockHead name="Identify Results" />
              <PanelTools>
                {["expand", "collapse", "expandNew", "form", "deselect", "copySmall", "print"].map((n) => <ToolButton key={n} $w={25} aria-label={n}><Icon n={n} s={14} /></ToolButton>)}
              </PanelTools>
              <ResultBox>
                <Results>
                  <thead><tr><Th>Feature</Th><Th $w="60px">Value</Th></tr></thead>
                  <tbody>
                    {results.map((r, i) => (
                      <Tr key={i} $selected={r.selected} $alt={r.alt}>
                        <Td>
                          <Feature $level={r.level}>
                            <Expander>{r.open && <Down c="#444" />}{r.closed && <Right />}</Expander>
                            {r.name}
                          </Feature>
                        </Td>
                        <Td>{r.value}</Td>
                      </Tr>
                    ))}
                  </tbody>
                </Results>
                <Pointer width="12" height="19" viewBox="0 0 12 19" aria-hidden="true">
                  <path d="M1 1v14l3.200-2.800L6.500 17.500l2.300-1-2.200-5H11z" fill="#fff" stroke="#222" strokeWidth="1.200" />
                </Pointer>
              </ResultBox>
              <ScrollBar>
                <ScrollArrow aria-label="Scroll left"><svg width="6" height="6" viewBox="0 0 8 8"><path d="M7 0v8L1 4z" fill="#b5b3b0" /></svg></ScrollArrow>
                <Thumb><GripRow $h={11} /></Thumb>
                <Gap />
                <ScrollArrow aria-label="Scroll right"><Right s={6} /></ScrollArrow>
              </ScrollBar>
              <FormRow>
                <Field>Mode
                  <SelectWrap $w={106}><Select defaultValue="c"><option value="c">Current layer</option></Select><UpDown /></SelectWrap>
                </Field>
                <Field><Check $small type="checkbox" />Auto open form</Field>
              </FormRow>
              <FormRow>
                <Field $off $gap={9}>View
                  <SelectWrap $w={74}><Select disabled defaultValue="t"><option value="t">Tree</option></Select><UpDown c="#bbb9b6" /></SelectWrap>
                </Field>
                <Gap />
                <PushButton>Help</PushButton>
              </FormRow>
              <FormEnd />
            </Dock>
          </Body>

          <StatusBar>
            <StatusField $grow><StatusLabel $w={40}>ordina</StatusLabel><TextBox $center defaultValue="218209.8,2472414.4" /></StatusField>
            <StatusButton $ml={3} aria-label="Toggle extents">
              <Svg s={16}><path d="M5 10l5-5 8 7c3 4-1 9-6 8z" fill="#ccc" stroke="#333" strokeWidth="1.800" /><path d="M1 4l6 7M5 1l5 6M10 1l3 5M16 11l6-7M7 13l9-4M9 17l9-4M12 12l5 6" stroke="#333" strokeWidth="1.600" /></Svg>
            </StatusButton>
            <StatusField>
              <StatusLabel $w={47} $end>Scale</StatusLabel>
              <TextBox $w={82} $joined defaultValue="1:1,399" /><Stepper $w={21} aria-label="Scales"><Down /></Stepper>
            </StatusField>
            <StatusButton $ml={4} aria-label="Lock scale">
              <Svg s={16}><path d="M7 11V7c0-6 10-6 10 0v4" stroke="#8a8a8a" strokeWidth="2.500" /><rect x="4" y="11" width="16" height="11" rx="1.500" fill="#666" /></Svg>
            </StatusButton>
            <StatusField $mr={10}>
              <StatusLabel $w={54} $end>lagnifie</StatusLabel>
              <TextBox $w={73} $joined defaultValue="100%" /><Stepper $w={13} aria-label="Step magnifier"><UpDown /></Stepper>
            </StatusField>
            <StatusField $mr={10}>
              <StatusLabel $w={30}>tati</StatusLabel>
              <TextBox $w={72} $joined defaultValue="0.0" /><Stepper $w={13} aria-label="Step rotation"><UpDown /></Stepper>
            </StatusField>
            <Field $gap={6}><CheckWrap><Check type="checkbox" defaultChecked /><Tick /></CheckWrap>Render</Field>
            <StatusButton $ml={16}>
              <Svg s={14}><circle cx="12" cy="12" r="9" stroke="#222" strokeWidth="4" /><path d="M12 1v22M1 12h22M12 5l5 7-5 7-5-7z" stroke="#333" strokeWidth="2" /></Svg>
              EPSG:32650 (OTF)
            </StatusButton>
            <StatusButton $ml={16} aria-label="Messages">
              <Svg s={16}><path d="M12 2c13 0 13 16 3 16v5l-5-5C-1 18-1 2 12 2z" fill="#555" /><circle cx="7" cy="10" r="1.600" fill="#eee" /><circle cx="12" cy="10" r="1.600" fill="#eee" /><circle cx="17" cy="10" r="1.600" fill="#eee" /></Svg>
            </StatusButton>
            <Corner />
          </StatusBar>
        </Window>
      </Sheet>
      <svg width="0" height="0" aria-hidden="true">
        <linearGradient id="folder" x2="0" y2="1"><stop offset="0" stopColor="#f9b88c" /><stop offset="1" stopColor="#d9481a" /></linearGradient>
      </svg>
    </Page>
  );
}
